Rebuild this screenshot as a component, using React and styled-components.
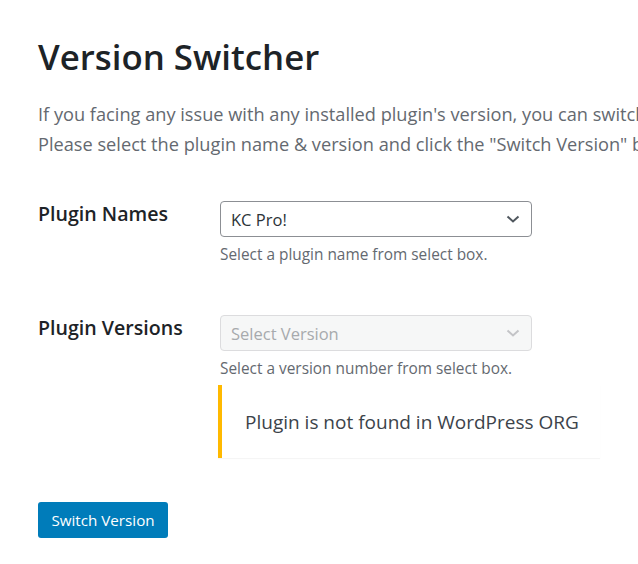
import styled, { createGlobalStyle } from "styled-components";

const Global = createGlobalStyle`
  html, body {
    margin: 0;
    padding: 0;
    background: #fff;
    overflow: hidden;
  }
  body {
    font-family: "Open Sans", "Noto Sans", sans-serif;
    color: #1d2327;
  }
`;

const Wrap = styled.div`
  padding: 33px 0 0 38px;
  width: 900px;
`;

const Title = styled.h1`
  margin: 0;
  font-size: 34.8px;
  font-weight: 600;
  line-height: 48px;
  color: #1d2327;
`;

const Intro = styled.p`
  margin: 18px 0 0;
  font-size: 18.2px;
  line-height: 30px;
  color: #646970;
  white-space: nowrap;
`;

const Form = styled.div`
  margin-top: 42px;
  display: grid;
  grid-template-columns: 182px 380px;
  row-gap: 50px;
`;

const Label = styled.div`
  font-size: 19.6px;
  font-weight: 600;
  line-height: 26px;
  color: #1d2327;
`;

const Field = styled.div`
  display: flex;
  flex-direction: column;
`;

const Select = styled.div`
  width: 312px;
  height: 36px;
  box-sizing: border-box;
  border: 1px solid ${(p) => (p.disabled ? "#dcdcde" : "#8c8f94")};
  background: ${(p) => (p.disabled ? "#f6f7f7" : "#fff")};
  color: ${(p) => (p.disabled ? "#a7aaad" : "#2c3338")};
  border-radius: 4px;
  display: flex;
  align-items: center;
  justify-content: space-between;
  padding: 0 10px;
  font-size: 16.5px;
`;

const Help = styled.div`
  margin-top: 8px;
  font-size: 15.4px;
  line-height: 20px;
  color: #646970;
`;

const Notice = styled.div`
  margin-top: 6px;
  margin-left: -2px;
  width: 382px;
  height: 73px;
  box-sizing: border-box;
  border-left: 4px solid #ffb900;
  box-shadow: 0 1px 1px rgba(0, 0, 0, 0.04);
  display: flex;
  align-items: center;
  padding-left: 23px;
  font-size: 19px;
  color: #3c434a;
`;

const Button = styled.button`
  margin-top: 44px;
  width: 130px;
  height: 36px;
  background: #007cba;
  border: none;
  border-radius: 3px;
  color: #fff;
  font-family: inherit;
  font-size: 15.2px;
  padding: 0;
`;

const Chevron = ({ color }) => (
  <svg width="16" height="16" viewBox="0 0 16 16" fill="none">
    <path d="M2.5 5.5L8 10.5L13.5 5.5" stroke={color} strokeWidth="2" />
  </svg>
);

export default function App() {
  return (
    <>
      <Global />
      <Wrap>
        <Title>Version Switcher</Title>
        <Intro>
          If you facing any issue with any installed plugin's version, you can switch to previous version.
          <br />
          Please select the plugin name &amp; version and click the "Switch Version" button.
        </Intro>
        <Form>
          <Label>Plugin Names</Label>
          <Field>
            <Select>
              KC Pro!
              <Chevron color="#50575e" />
            </Select>
            <Help>Select a plugin name from select box.</Help>
          </Field>
          <Label>Plugin Versions</Label>
          <Field>
            <Select disabled>
              Select Version
              <Chevron color="#c3c4c7" />
            </Select>
            <Help>Select a version number from select box.</Help>
            <Notice>Plugin is not found in WordPress ORG</Notice>
          </Field>
        </Form>
        <Button>Switch Version</Button>
      </Wrap>
    </>
  );
}
